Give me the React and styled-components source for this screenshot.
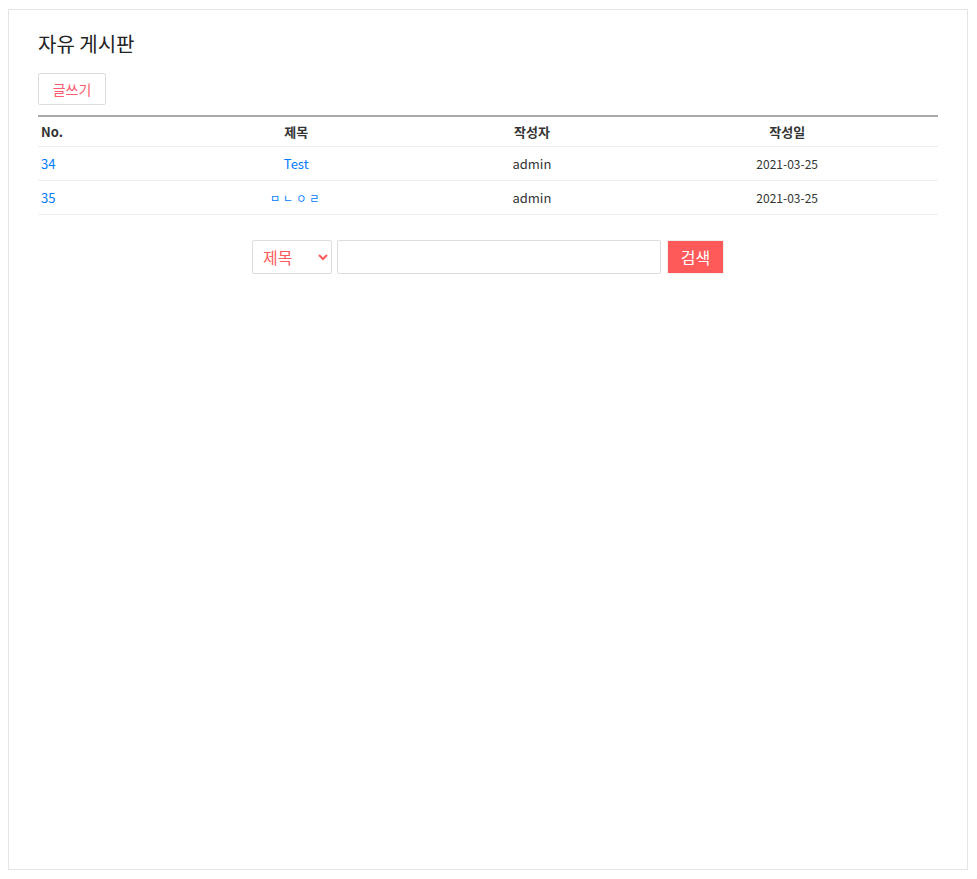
import React, { useState } from 'react';
import styled, { createGlobalStyle } from 'styled-components';

const GlobalStyle = createGlobalStyle`
  body {
    margin: 8px;
    font-family: "Noto Sans CJK KR", "Noto Sans", sans-serif;
    color: #333;
    background: #fff;
  }
`;

// outer board frame
const Board = styled.div`
  box-sizing: border-box;
  width: 960px;
  height: 861px;
  margin-top: 1px;
  border: 1px solid #e5e5e5;
  padding: 20px 29px;
`;

const Title = styled.h2`
  margin: 0 0 15px;
  font-size: 20px;
  font-weight: 400;
  color: #222;
  line-height: 28px;
`;

const WriteButton = styled.button`
  box-sizing: border-box;
  display: block;
  width: 68px;
  height: 32px;
  padding: 0;
  margin-bottom: 10px;
  background: #fff;
  border: 1px solid #ddd;
  border-radius: 2px;
  color: #ff5a6e;
  font-family: inherit;
  font-size: 14px;
  cursor: pointer;
`;

const Table = styled.table`
  width: 900px;
  border-collapse: collapse;
  border-top: 2px solid #aaa;
  font-size: 13px;
`;

const Th = styled.th`
  width: ${({ w }) => w}px;
  height: 29px;
  padding: 0 3px;
  text-align: ${({ align }) => align || 'center'};
  font-weight: 700;
  color: #333;
  border-bottom: 1px solid #eee;
`;

const Td = styled.td`
  height: 33px;
  padding: 0 3px;
  text-align: ${({ align }) => align || 'center'};
  border-bottom: 1px solid #eee;
  font-size: ${({ small }) => (small ? '12px' : '13px')};
  color: #333;
`;

const Link = styled.a`
  color: #007bff;
  text-decoration: none;
  font-size: ${({ tiny }) => (tiny ? '11px' : '13px')};
  letter-spacing: ${({ tiny }) => (tiny ? '3px' : '0')};
`;

const SearchBar = styled.form`
  display: flex;
  justify-content: center;
  gap: 5px;
  margin-top: 25px;
`;

const Select = styled.select`
  box-sizing: border-box;
  width: 80px;
  height: 34px;
  padding: 0 6px;
  border: 1px solid #ddd;
  border-radius: 2px;
  background: #fff;
  color: #ff5a5a;
  font-family: inherit;
  font-size: 16px;
`;

const Input = styled.input`
  box-sizing: border-box;
  width: 324px;
  height: 34px;
  border: 1px solid #ddd;
  border-radius: 2px;
  font-family: inherit;
`;

const SearchButton = styled.button`
  box-sizing: border-box;
  width: 57px;
  height: 34px;
  margin-left: 1px;
  border: 1px solid #eee;
  background: #ff5a5a;
  color: #fff;
  font-family: inherit;
  font-size: 16px;
`;

const posts = [
  { no: 34, title: 'Test', author: 'admin', date: '2021-03-25' },
  { no: 35, title: 'ㅁㄴㅇㄹ', author: 'admin', date: '2021-03-25', tiny: true },
];

export default function App() {
  const [field, setField] = useState('title');
  return (
    <>
      <GlobalStyle />
      <Board>
        <Title>자유 게시판</Title>
        <WriteButton>글쓰기</WriteButton>
        <Table>
          <thead>
            <tr>
              <Th w={124} align="left">No.</Th>
              <Th w={264}>제목</Th>
              <Th w={208}>작성자</Th>
              <Th w={304}>작성일</Th>
            </tr>
          </thead>
          <tbody>
            {posts.map((p) => (
              <tr key={p.no}>
                <Td align="left"><Link href="#">{p.no}</Link></Td>
                <Td><Link href="#" tiny={p.tiny}>{p.title}</Link></Td>
                <Td>{p.author}</Td>
                <Td small>{p.date}</Td>
              </tr>
            ))}
          </tbody>
        </Table>
        <SearchBar onSubmit={(e) => e.preventDefault()}>
          <Select value={field} onChange={(e) => setField(e.target.value)}>
            <option value="title">제목</option>
            <option value="author">작성자</option>
          </Select>
          <Input type="text" />
          <SearchButton type="submit">검색</SearchButton>
        </SearchBar>
      </Board>
    </>
  );
}
